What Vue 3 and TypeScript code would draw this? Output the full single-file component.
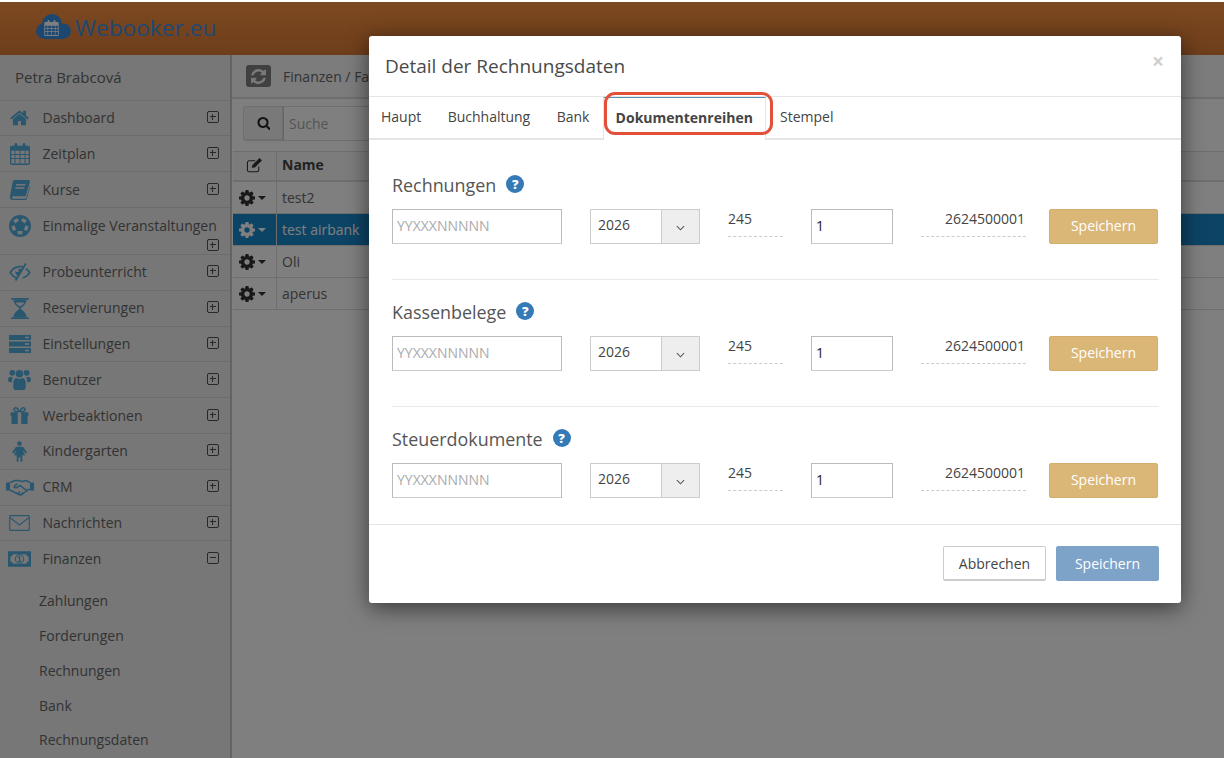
<script setup lang="ts">
interface MenuItem { label: string; icon: string; tall?: boolean; open?: boolean }
const menu: MenuItem[] = [
  { label: 'Dashboard', icon: 'home' },
  { label: 'Zeitplan', icon: 'calendar' },
  { label: 'Kurse', icon: 'book' },
  { label: 'Einmalige Veranstaltungen', icon: 'ball', tall: true },
  { label: 'Probeunterricht', icon: 'eye' },
  { label: 'Reservierungen', icon: 'hourglass' },
  { label: 'Einstellungen', icon: 'server' },
  { label: 'Benutzer', icon: 'users' },
  { label: 'Werbeaktionen', icon: 'gift' },
  { label: 'Kindergarten', icon: 'female' },
  { label: 'CRM', icon: 'handshake' },
  { label: 'Nachrichten', icon: 'mail' },
  { label: 'Finanzen', icon: 'money', open: true },
]
const submenu = ['Zahlungen', 'Forderungen', 'Rechnungen', 'Bank', 'Rechnungsdaten']
const rows = [
  { name: 'test2' },
  { name: 'test airbank', selected: true },
  { name: 'Oli' },
  { name: 'aperus' },
]
const tabs = ['Haupt', 'Buchhaltung', 'Bank', 'Dokumentenreihen', 'Stempel']
const sections = ['Rechnungen', 'Kassenbelege', 'Steuerdokumente']

function polar(deg: number, r: number): string {
  const a = (deg * Math.PI) / 180
  return `${(12 + r * Math.cos(a)).toFixed(2)} ${(12 + r * Math.sin(a)).toFixed(2)}`
}
const ballPath = (() => {
  let d = 'M12 0a12 12 0 1 1 0 24a12 12 0 1 1 0-24z'
  for (let i = 0; i < 5; i++) {
    const m = -54 + i * 72
    d += `M${polar(m - 27, 6)}L${polar(m + 27, 6)}L${polar(m + 15, 9.4)}L${polar(m - 15, 9.4)}z`
  }
  return d
})()
</script>

<template>
  <div class="page">
    <svg class="defs" width="0" height="0" aria-hidden="true">
      <symbol id="i-home" viewBox="0 0 1664 1408"><path transform="translate(0,-192)" d="M1408 992v480q0 26-19 45t-45 19h-384v-384h-256v384h-384q-26 0-45-19t-19-45v-480q0-1 .5-3t.5-3l575-474 575 474q1 2 1 6zm223-69l-62 74q-8 9-21 11h-3q-13 0-21-7l-692-577-692 577q-12 8-24 7-13-2-21-11l-62-74q-8-10-7-23.500t11-21.500l719-599q32-26 76-26t76 26l244 204v-195q0-14 9-23t23-9h192q14 0 23 9t9 23v408l219 182q10 8 11 21.500t-7 23.500z"/></symbol>
      <symbol id="i-cog" viewBox="128 128 1536 1536"><path d="M1152 896q0-106-75-181t-181-75-181 75-75 181 75 181 181 75 181-75 75-181zm512-109v222q0 12-8 23t-20 13l-185 28q-19 54-39 91 35 50 107 138 10 12 10 25t-9 23q-27 37-99 108t-94 71q-12 0-26-9l-138-108q-44 23-91 38-16 136-29 186-7 28-36 28h-222q-14 0-24.500-8.500t-11.500-21.500l-28-184q-49-16-90-37l-141 107q-10 9-25 9-14 0-25-11-126-114-165-168-7-10-7-23 0-12 8-23 15-21 51-66.500t54-70.500q-27-50-41-99l-183-27q-13-2-21-12.500t-8-23.500v-222q0-12 8-23t19-13l186-28q14-46 39-92-40-57-107-138-10-12-10-24 0-10 9-23 26-36 98.500-107.500t94.500-71.500q13 0 26 10l138 107q44-23 91-38 16-136 29-186 7-28 36-28h222q14 0 24.500 8.500t11.500 21.500l28 184q49 16 90 37l142-107q9-9 24-9 13 0 25 10 129 119 165 170 7 8 7 22 0 12-8 23-15 21-51 66.500t-54 70.500q26 50 41 98l183 28q13 2 21 12.500t8 23.500z"/></symbol>
      <symbol id="i-search" viewBox="0 128 1664 1664"><path d="M1216 832q0-185-131.500-316.500t-316.500-131.500-316.500 131.500-131.500 316.500 131.500 316.500 316.500 131.500 316.500-131.500 131.500-316.500zm512 832q0 52-38 90t-90 38q-54 0-90-38l-343-342q-179 124-399 124-143 0-273.500-55.500t-225-150-150-225-55.500-273.500 55.500-273.500 150-225 225-150 273.500-55.500 273.500 55.500 225 150 150 225 55.500 273.500q0 220-124 399l343 343q37 37 37 90z"/></symbol>
      <symbol id="i-calendar" viewBox="0 0 22 24"><path fill-rule="evenodd" d="M2 3h3V1.500a1.500 1.500 0 0 1 3 0V3h6V1.500a1.500 1.500 0 0 1 3 0V3h3a2 2 0 0 1 2 2v17a2 2 0 0 1-2 2H2a2 2 0 0 1-2-2V5a2 2 0 0 1 2-2zM1.500 8.500V12H5V8.500zM6 8.500V12h4.500V8.500zM11.500 8.500V12H16V8.500zM17 8.500V12h3.500V8.500zM1.500 13v3.500H5V13zM6 13v3.500h4.500V13zM11.500 13v3.500H16V13zM17 13v3.500h3.500V13zM1.500 17.500V22a.5.5 0 0 0 .5.500h3v-5zM6 17.500v5h4.500v-5zM11.500 17.500v5H16v-5zM17 17.500v5h3a.5.5 0 0 0 .5-.5v-4.500z"/></symbol>
      <symbol id="i-book" viewBox="0 0 22 22"><path fill-rule="evenodd" d="M5 0h15.500a1.500 1.500 0 0 1 1.400 1.900L17.500 17a1.500 1.500 0 0 1-1.400 1H3.500c-1.500 0-1.500 2.500 0 2.500h13.200c.6 0 1-.3 1.200-.9L21.700 6.500l.3.200v1L18.500 20.500A2 2 0 0 1 16.600 22H3.200C1 22-.5 20-.1 18L3 2a2.500 2.500 0 0 1 2-2zM7 4.500l-.4 1.500h10l.4-1.500zM6 8l-.4 1.500h10L16 8z"/></symbol>
      <symbol id="i-ball" viewBox="0 0 24 24"><path fill-rule="evenodd" :d="ballPath"/></symbol>
      <symbol id="i-eye" viewBox="0 0 24 20"><path fill-rule="evenodd" d="M17.500 0l1.800 1L8 20l-1.800-1 1-1.700C3.800 15.500 1.200 12.800 0 10.500 2.500 6 7 3 12 3c1.300 0 2.500.2 3.600.5zM14.600 5.100A9 9 0 0 0 12 4.700c-3.800 0-7.300 2.400-9.700 5.800 1.300 2 3.300 4 5.700 5.300l1-1.800c-1.700-1.500-2.600-3.400-2-5.500.2 1 1 1.500 2 1.500 1 0 1.800-.8 1.800-1.800 0-.7-.4-1.200-1-1.500 1-.5 2.500-.5 3.600 0zM19 5.500c2 1.200 3.700 3 5 5-2 3.700-5.800 6.500-10 7l1.200-2c2.700-.8 5-2.800 6.500-5-.8-1.200-2-2.400-3.500-3.300z"/></symbol>
      <symbol id="i-hourglass" viewBox="0 0 20 24"><path d="M0 0h20v2H0zM0 22h20v2H0z"/><path d="M2.500 22c.3-4 2-6 6-9 1-.7 1-1.300 0-2-4-3-5.700-5-6-9h15c-.3 4-2 6-6 9-1 .7-1 1.300 0 2 4 3 5.700 5 6 9zM5 5c.6 1.500 2.500 3 5 4.800C12.500 8 14.400 6.500 15 5z" fill-rule="evenodd"/></symbol>
      <symbol id="i-server" viewBox="0 0 22 18"><path fill-rule="evenodd" d="M0 0h22v5H0zM0 6.500h22v5H0zM0 13h22v5H0zM16 1.800v1.400h4V1.800zM16 8.300v1.400h4V8.300zM16 14.800v1.400h4v-1.400z"/></symbol>
      <symbol id="i-users" viewBox="0 0 24 22"><circle cx="12" cy="5" r="4"/><circle cx="4.500" cy="4" r="3"/><circle cx="19.500" cy="4" r="3"/><path d="M5.500 14c0-2.500 2-4.500 3.500-4.500 1 .8 2 1 3 1s2-.2 3-1c1.500 0 3.500 2 3.500 4.500v5c0 2-1.500 3-3 3h-7c-1.500 0-3-1-3-3zM0 11.500c0-2.500 1-3.500 2.500-3.500 1 .7 1.800.9 3 .8-.8.700-1.500 2.200-1.500 4.700v.5c-2 0-4-.5-4-2.500zM24 11.500c0-2.500-1-3.500-2.500-3.500-1 .7-1.800.9-3 .8.800.7 1.500 2.200 1.500 4.700v.5c2 0 4-.5 4-2.500z"/></symbol>
      <symbol id="i-gift" viewBox="0 0 20 19"><path fill-rule="evenodd" d="M1 6h5.500C4.500 5.500 3 4.500 3 2.800 3 1.200 4.200 0 5.700 0 7.500 0 9 1.500 10 3.800 11 1.500 12.500 0 14.300 0 15.800 0 17 1.200 17 2.800c0 1.700-1.500 2.700-3.500 3.200H19a1 1 0 0 1 1 1v3h-1v8a1 1 0 0 1-1 1H2a1 1 0 0 1-1-1v-8H0V7a1 1 0 0 1 1-1zM8 6h4V19H8zM5.700 1.800c-.6 0-1 .5-1 1 0 1.200 2 1.600 3.500 1.700-.7-1.500-1.500-2.700-2.500-2.700zm8.600 0c-1 0-1.800 1.200-2.500 2.700 1.500-.1 3.500-.5 3.500-1.700 0-.5-.4-1-1-1z"/></symbol>
      <symbol id="i-female" viewBox="0 0 16 22"><circle cx="8" cy="2.500" r="2.500"/><path d="M5 6h6c.8 0 1.200.3 1.500 1L16 12l-1.400 1.200L11 9.500 14 15h-3v6a1 1 0 0 1-2 0v-4H7v4a1 1 0 0 1-2 0v-6H2l3-5.500-3.600 3.700L0 12l3.500-5c.3-.7.700-1 1.500-1z"/></symbol>
      <symbol id="i-handshake" viewBox="0 0 28 16"><path fill="none" stroke="currentColor" stroke-width="1.500" d="M4 3l5-2h3l5 1 3-1 4 2M24 10l-2 0-6 5c-1 .7-2 .5-3 0L5 11H4M11 4L8 7.500c1 1.200 3 1 4-.5l2-1 8 6M12 14l2-2M15 15l2-2"/><path d="M0 3h4v8H0zM24 3h4v8h-4z"/></symbol>
      <symbol id="i-mail" viewBox="0 0 22 17"><path fill-rule="evenodd" d="M1.500 0h19A1.500 1.500 0 0 1 22 1.500v14a1.500 1.500 0 0 1-1.500 1.500h-19A1.500 1.500 0 0 1 0 15.500v-14A1.500 1.500 0 0 1 1.500 0zM1.200 1.200v.8L11 9.800 20.800 2v-.8zm0 2.400v12.200h19.600V3.600L11 11.400z"/></symbol>
      <symbol id="i-money" viewBox="0 0 24 16"><path fill-rule="evenodd" d="M0 0h24v16H0zM5 3A2.500 2.500 0 0 1 2.500 5.500v5A2.500 2.500 0 0 1 5 13h14a2.500 2.500 0 0 1 2.500-2.500v-5A2.500 2.500 0 0 1 19 3z"/><circle cx="12" cy="8" r="4.400" fill="none" stroke="currentColor" stroke-width="1.100"/><path d="M11.600 4.800h1.200v5.400h.9v1h-3.400v-1h1.100V6.200l-1 .8-.6-.8z"/></symbol>
      <symbol id="i-refresh" viewBox="0 0 1536 1536"><path d="M1511 928q0 5-1 7-64 268-268 434.500t-478 166.500q-146 0-282.500-55t-243.500-157l-129 129q-19 19-45 19t-45-19-19-45v-448q0-26 19-45t45-19h448q26 0 45 19t19 45-19 45l-137 137q71 66 161 102t187 36q134 0 250-65t186-179q11-17 53-117 8-23 30-23h192q13 0 22.500 9.500t9.500 22.500zm25-800v448q0 26-19 45t-45 19h-448q-26 0-45-19t-19-45 19-45l138-138q-148-137-349-137-134 0-250 65t-186 179q-11 17-53 117-8 23-30 23h-199q-13 0-22.500-9.500t-9.500-22.500v-7q65-268 270-434.500t480-166.500q146 0 284 55.500t245 156.500l130-129q19-19 45-19t45 19 19 45z"/></symbol>
      <symbol id="i-edit" viewBox="0 0 24 22"><path fill="none" stroke="currentColor" stroke-width="1.500" d="M18 13v5a2.500 2.500 0 0 1-2.500 2.500h-11A2.500 2.500 0 0 1 2 18V7.500A2.500 2.500 0 0 1 4.500 5H13"/><path d="M8 15l1-4L19 1l3.500 3.500-10 10z"/></symbol>
      <symbol id="i-cloud" viewBox="0 0 35 25"><circle cx="7.500" cy="17" r="7.500"/><circle cx="16" cy="10" r="10"/><circle cx="27.500" cy="17" r="7.500"/><rect x="7" y="12" width="21" height="13"/></symbol>
    </svg>

    <header class="topbar">
      <div class="logo">
        <span class="cloud">
          <svg class="cloud-shape"><use href="#i-cloud" /></svg>
          <svg class="cloud-cal" viewBox="0 0 22 24"><use href="#i-calendar" /></svg>
        </span>
        <span class="logo-text">Webooker.eu</span>
      </div>
    </header>

    <div class="main">
      <aside class="sidebar">
        <div class="user">Petra Brabcová</div>
        <nav>
          <div v-for="m in menu" :key="m.label" class="item" :class="{ tall: m.tall, open: m.open }">
            <span class="ico"><svg :class="'s-' + m.icon"><use :href="'#i-' + m.icon" /></svg></span>
            <span class="label">{{ m.label }}</span>
            <span class="toggle"><span class="bar"></span><span v-if="!m.open" class="bar vert"></span></span>
          </div>
        </nav>
        <div class="sub">
          <div v-for="s in submenu" :key="s" class="sub-item">{{ s }}</div>
        </div>
      </aside>

      <section class="content">
        <div class="crumbs">
          <span class="refresh"><svg><use href="#i-refresh" /></svg></span>
          <span class="crumb-text">Finanzen / Fa</span>
        </div>
        <div class="search">
          <span class="search-btn"><svg><use href="#i-search" /></svg></span>
          <span class="search-input">Suche</span>
        </div>
        <div class="table">
          <div class="tr head">
            <div class="c1"><svg class="edit"><use href="#i-edit" /></svg></div>
            <div class="c2">Name</div>
          </div>
          <div v-for="r in rows" :key="r.name" class="tr" :class="{ sel: r.selected }">
            <div class="c1"><svg class="cog"><use href="#i-cog" /></svg><span class="caret"></span></div>
            <div class="c2">{{ r.name }}</div>
          </div>
        </div>
      </section>
    </div>

    <div class="backdrop"></div>

    <div class="modal">
      <div class="m-head">
        <span class="m-title">Detail der Rechnungsdaten</span>
        <span class="close">×</span>
      </div>
      <div class="tabs">
        <span v-for="t in tabs" :key="t" class="tab" :class="{ active: t === 'Dokumentenreihen' }">{{ t }}</span>
        <span class="mark"></span>
      </div>
      <div class="m-body">
        <div v-for="s in sections" :key="s" class="sect">
          <div class="sect-title">{{ s }} <span class="help">?</span></div>
          <div class="sect-row">
            <span class="fmt">YYXXXNNNNN</span>
            <span class="year"><span class="year-v">2026</span><span class="year-b"><svg viewBox="0 0 10 6"><path d="M1 1l4 4 4-4" fill="none" stroke="#555" stroke-width="1.200"/></svg></span></span>
            <span class="ro ro-a">245</span>
            <span class="num">1</span>
            <span class="ro ro-b">2624500001</span>
            <span class="save">Speichern</span>
          </div>
        </div>
      </div>
      <div class="m-foot">
        <span class="btn cancel">Abbrechen</span>
        <span class="btn ok">Speichern</span>
      </div>
    </div>
  </div>
</template>

<style>
html, body { margin: 0; background: #fff; }
</style>

<style scoped>
.page {
  position: relative;
  width: 1224px;
  height: 758px;
  overflow: hidden;
  background: #fff;
  font-family: "Open Sans", "Noto Sans", sans-serif;
  font-size: 14px;
  color: #666;
  display: flex;
  flex-direction: column;
}
.defs { position: absolute; }
.topbar {
  margin-top: 2px;
  height: 53px;
  flex: none;
  background: linear-gradient(#fa9240, #dc7c38);
  display: flex;
  align-items: center;
}
.logo { display: flex; align-items: center; margin-left: 36px; color: #3a92e4; }
.cloud { position: relative; width: 35px; height: 25px; display: block; margin-bottom: 4px; }
.cloud-shape { width: 35px; height: 25px; fill: #368ee0; display: block; }
.cloud-cal { position: absolute; left: 8px; top: 6px; width: 15px; height: 16px; fill: #fff; }
.logo-text { font-size: 22.7px; margin-left: 4px; line-height: 32px; margin-top: -1px; }
.main { flex: 1; display: flex; min-height: 0; }
.sidebar { width: 230px; flex: none; background: #eeeeee; border-right: 2px solid #c9c9c9; }
.user {
  height: 45.6px;
  box-sizing: border-box;
  padding: 11px 0 0 15px;
  font-size: 15px;
  line-height: 22px;
  color: #666;
  border-bottom: 1px solid #dcdcdc;
}
.item {
  display: flex;
  flex-wrap: wrap;
  align-items: center;
  box-sizing: border-box;
  height: 35.8px;
  padding: 0 11px 0 42.5px;
  position: relative;
  border-bottom: 1px solid #d8d8d8;
  line-height: 20px;
}
.item.open { border-bottom: 0; }
.item.tall { height: 47px; padding-top: 8px; align-content: flex-start; }
.label { white-space: nowrap; }
.ico {
  position: absolute;
  left: 0;
  top: 0;
  width: 39px;
  height: 35px;
  display: flex;
  align-items: center;
  justify-content: center;
  color: #52aee0;
  fill: #52aee0;
}
.item.tall .ico { height: 36px; }
.ico svg { width: 22px; height: 22px; display: block; }
.ico .s-home { width: 19px; height: 16px; }
.ico .s-calendar { width: 20px; height: 22px; }
.ico .s-book { width: 20px; height: 20px; }
.ico .s-eye { width: 22px; height: 18px; }
.ico .s-hourglass { width: 18px; height: 21px; }
.ico .s-server { width: 22px; height: 18px; }
.ico .s-users { width: 23px; height: 21px; }
.ico .s-gift { width: 19px; height: 17px; }
.ico .s-female { width: 15px; height: 21px; }
.ico .s-handshake { width: 28px; height: 17px; }
.ico .s-mail { width: 21px; height: 16px; }
.ico .s-money { width: 23px; height: 16px; }
.toggle {
  position: relative;
  width: 12px;
  height: 12px;
  box-sizing: border-box;
  border: 1px solid #505050;
  border-radius: 2px;
  margin-left: auto;
  margin-top: -2px;
}
.item.tall .toggle { margin-top: 3px; }
.bar { position: absolute; left: 2px; right: 2px; top: 4px; height: 1px; background: #505050; }
.bar.vert { left: 4px; right: auto; top: 2px; bottom: 2px; width: 1px; height: auto; }
.sub { padding-top: 7px; }
.sub-item { height: 34.8px; line-height: 34.8px; padding-left: 39px; }
.content { flex: 1; min-width: 0; background: #fff; }
.crumbs {
  height: 44px;
  box-sizing: border-box;
  display: flex;
  align-items: center;
  padding-left: 14px;
  background: #f8f8f8;
  border-bottom: 2px solid #dcdcdc;
}
.refresh {
  width: 25px;
  height: 22px;
  border-radius: 3px;
  background: #808080;
  display: flex;
  align-items: center;
  justify-content: center;
  fill: #f2f2f2;
}
.refresh svg { width: 15px; height: 15px; }
.crumb-text { margin-left: 12px; }
.search { display: flex; margin: 7px 0 0 11px; height: 35px; }
.search-btn {
  width: 40px;
  box-sizing: border-box;
  display: flex;
  align-items: center;
  justify-content: center;
  background: #f2f2f2;
  border: 1px solid #ddd;
  border-bottom-width: 2px;
  border-radius: 3px 0 0 3px;
  fill: #222;
}
.search-btn svg { width: 13px; height: 13px; }
.search-input {
  width: 300px;
  box-sizing: border-box;
  border: 1px solid #ddd;
  border-left: 1px solid #ccc;
  padding-left: 5px;
  line-height: 33px;
  color: #aaa;
}
.table { margin: 10px 0 0 1px; }
.tr { display: flex; height: 32.1px; box-sizing: border-box; border-bottom: 1px solid #ddd; line-height: 31px; }
.tr.head { height: 31px; line-height: 26px; font-weight: 700; color: #444; background: #f8f8f8; border-top: 1px solid #ddd; border-bottom-width: 2px; }
.tr.head .c1 { color: #333; fill: #333; justify-content: center; padding-left: 0; padding-bottom: 2px; }
.c1 {
  width: 44px;
  flex: none;
  box-sizing: border-box;
  border-right: 1px solid #ddd;
  display: flex;
  align-items: center;
  justify-content: flex-start;
  padding-left: 6px;
  gap: 3px;
  fill: #333;
}
.c2 { padding-left: 5px; }
.cog { width: 16px; height: 16px; }
.edit { width: 17px; height: 16px; }
.caret { width: 0; height: 0; border: 4px solid transparent; border-top-color: #333; border-bottom: 0; }
.tr.sel { background: #1888ca; color: #fff; }
.tr.sel .c1 { fill: #fff; }
.tr.sel .caret { border-top-color: #fff; }
.backdrop { position: absolute; inset: 2px 0 0; background: rgba(0, 0, 0, .5); }
.modal {
  position: absolute;
  left: 369px;
  top: 36px;
  width: 812px;
  height: 567px;
  background: #fff;
  border-radius: 3px;
  box-shadow: 0 5px 22px rgba(0, 0, 0, .55);
  color: #333;
  display: flex;
  flex-direction: column;
}
.m-head { height: 61px; flex: none; box-sizing: border-box; position: relative; padding: 16px 0 0 16px; border-bottom: 1px solid #e5e5e5; }
.m-title { font-size: 19px; line-height: 28px; color: #4a4a4a; }
.close { position: absolute; right: 17px; top: 13px; font-size: 21px; line-height: 24px; font-weight: 700; color: #cfcfcf; }
.tabs { height: 43px; flex: none; box-sizing: border-box; display: flex; position: relative; padding-left: 12px; gap: 26.4px; border-bottom: 2px solid #e5e5e5; line-height: 40px; color: #444; }
.tab { white-space: nowrap; }
.tab.active {
  font-weight: 700;
  color: #444;
  padding: 0 12px;
  margin: 0 -12.2px 0 -13.2px;
  height: 43px;
  box-sizing: border-box;
  background: #fff;
  border-left: 1px solid #e5e5e5;
  border-right: 1px solid #e5e5e5;
  border-top: 1px solid #5b8fb0;
}
.mark { position: absolute; left: 234.5px; top: -5px; width: 169.5px; height: 43px; box-sizing: border-box; border: 3.5px solid #e2503a; border-radius: 11px; }
.m-body { height: 385px; flex: none; box-sizing: border-box; padding: 13px 22px 0 23px; border-bottom: 1px solid #e5e5e5; }
.sect { height: 127px; box-sizing: border-box; padding-top: 19px; border-bottom: 1px solid #e9e9e9; }
.sect:last-child { border-bottom: 0; height: auto; }
.sect-title { font-size: 17.9px; line-height: 26px; color: #555; display: flex; align-items: flex-start; gap: 10px; height: 28px; }
.help { width: 18px; height: 18px; border-radius: 50%; background: #337ab7; color: #fff; font-size: 13px; font-weight: 800; line-height: 18px; text-align: center; margin-top: 3px; }
.sect-row { display: flex; margin-top: 9px; height: 35px; }
.fmt, .num { box-sizing: border-box; border: 1px solid #bbb; border-bottom-color: #ccc; height: 35px; line-height: 32px; padding-left: 4px; }
.fmt { width: 170px; color: #aaa; }
.year { width: 110px; box-sizing: border-box; margin-left: 28px; display: flex; border: 1px solid #ccc; height: 35px; }
.year-v { flex: 1; padding-left: 7px; line-height: 30px; color: #444; }
.year-b { width: 37px; background: #eee; border-left: 1px solid #ccc; display: flex; align-items: center; justify-content: center; }
.year-b svg { width: 9px; height: 6px; margin-top: 2px; }
.ro { box-sizing: border-box; height: 28px; line-height: 20px; border-bottom: 1px dashed #ccc; color: #444; }
.ro-a { width: 55px; margin-left: 28px; }
.num { width: 82px; margin-left: 28px; color: #222; }
.ro-b { width: 105px; margin-left: 28px; text-align: right; padding-right: 1px; }
.save { width: 109px; height: 35px; box-sizing: border-box; margin-left: 23px; background: #dbb777; border: 1px solid #d4ae6c; border-radius: 2px; color: #fff; text-align: center; line-height: 32px; }
.m-foot { flex: 1; display: flex; justify-content: flex-end; gap: 10px; padding: 21px 22px 0 0; }
.btn { height: 35px; box-sizing: border-box; text-align: center; line-height: 33px; border-radius: 2px; }
.cancel { width: 103px; background: #fff; border: 1px solid #ccc; border-bottom-width: 2px; color: #444; }
.ok { width: 103px; background: #7ea3c9; border: 1px solid #7ea3c9; color: #fff; }
</style>
